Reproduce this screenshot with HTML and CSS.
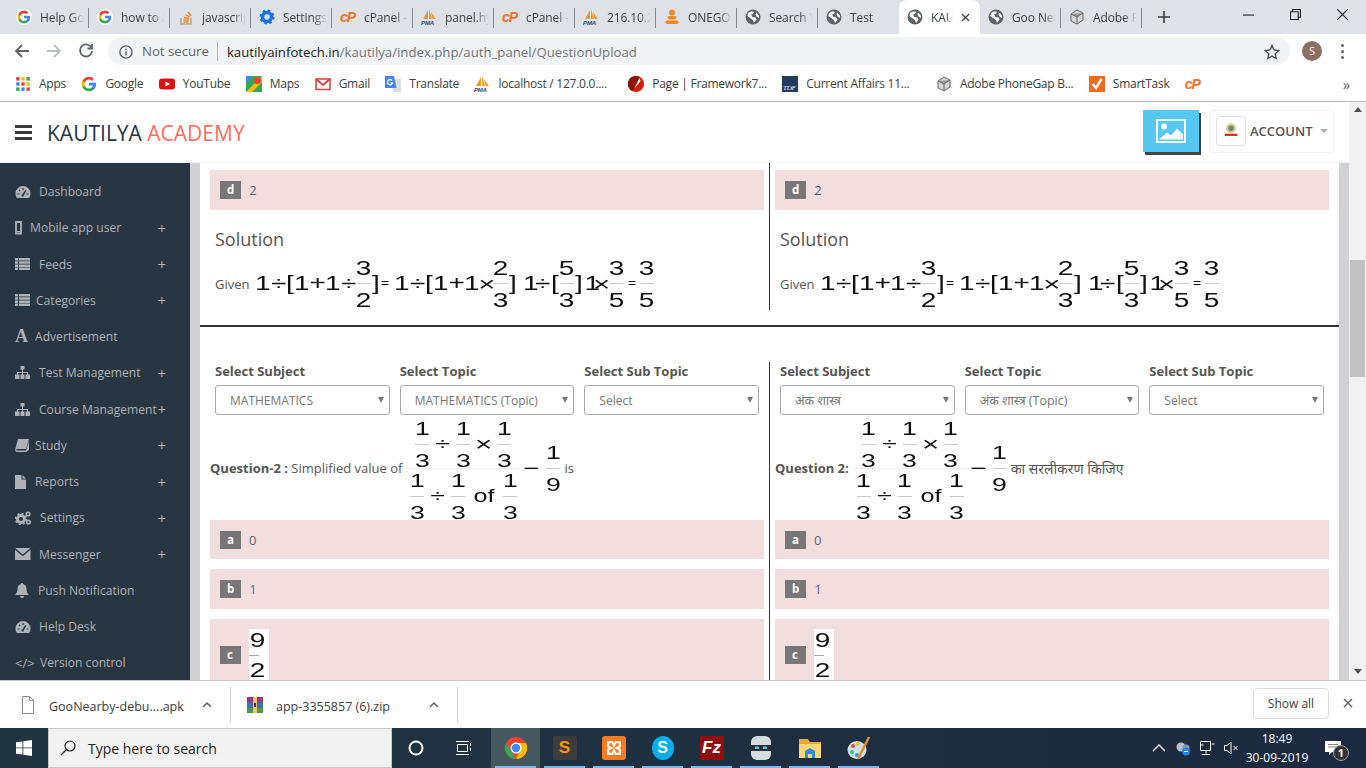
FILE: index.html
```html
<!DOCTYPE html>
<html lang="en">
  <head>
    <meta charset="UTF-8" />
    <meta name="viewport" content="width=device-width, initial-scale=1" />
    <title>KAUTILYA ACADEMY</title>
    <link rel="stylesheet" href="styles.css">
  </head>
  <body>
    <!-- Shared icons -->
    <svg class="defs" aria-hidden="true">
      <symbol id="i-g" viewBox="0 0 24 24">
        <path fill="#4285F4" d="M22.56 12.25c0-.78-.07-1.53-.2-2.25H12v4.26h5.92c-.26 1.37-1.04 2.53-2.21 3.31v2.77h3.57c2.08-1.92 3.28-4.74 3.28-8.09z"/>
        <path fill="#34A853" d="M12 23c2.97 0 5.46-.98 7.28-2.66l-3.57-2.77c-.98.66-2.23 1.06-3.71 1.06-2.86 0-5.29-1.93-6.16-4.53H2.18v2.84C3.99 20.53 7.7 23 12 23z"/>
        <path fill="#FBBC05" d="M5.84 14.09c-.22-.66-.35-1.36-.35-2.09s.13-1.43.35-2.09V7.07H2.18C1.43 8.55 1 10.22 1 12s.43 3.45 1.18 4.93l3.66-2.84z"/>
        <path fill="#EA4335" d="M12 5.38c1.62 0 3.06.56 4.21 1.64l3.15-3.15C17.45 2.09 14.97 1 12 1 7.7 1 3.99 3.47 2.18 7.07l3.66 2.84c.87-2.6 3.3-4.53 6.16-4.53z"/>
      </symbol>
      <symbol id="i-globe" viewBox="0 0 16 16">
        <circle cx="8" cy="8" r="7.5" fill="#5f6368"/>
        <path fill="#fff" d="M3 4l3-1.6 3 .4-1 2.2-2 .6L7.5 8l3 .5 1 2-2.500 3.600-1-3.100L5 9 2.500 7zM11 3.500l2.500 2.500.8 3-2.300-1-1.500-2.500z"/>
      </symbol>
      <symbol id="i-pma" viewBox="0 0 16 16">
        <path fill="#f29b2c" d="M2 10L7 1v9zM8 10V0l3 10zM11.500 10L10 3l5 7z"/>
        <text x="0" y="15.500" font-size="6" font-weight="700" font-style="italic" font-family="Liberation Sans" fill="#2b4a7f">PMA</text>
      </symbol>
      <symbol id="i-adobe" viewBox="0 0 16 16">
        <path fill="#d6d6d6" stroke="#666" d="M2 5l6-4 6 3v7l-6 4-6-3z"/>
        <path fill="#999" stroke="#666" d="M2 5l6 3 6-4M8 8v7"/>
      </symbol>
      <symbol id="i-gauge" viewBox="0 0 16 14">
        <path fill="currentColor" d="M8 1a7.500 7.500 0 0 1 7.500 7.500c0 1.700-.5 3.200-1.400 4.500H1.900A7.500 7.500 0 0 1 .5 8.500 7.500 7.500 0 0 1 8 1z"/>
        <path fill="#2a3542" d="M7.500 3h1.200v2H7.500zM3.600 5l1-.8 1 1.400-1 .8zM2.500 8.500h2v1h-2zM11.500 8.500h2v1h-2zM10.200 5l1.200.8-2.600 4.400a1.200 1.200 0 1 1-1.300-1z"/>
      </symbol>
      <symbol id="i-list" viewBox="0 0 15 12">
        <path fill="currentColor" d="M0 0h3v2.500H0zM4 0h11v2.500H4zM0 3.200h3v2.500H0zM4 3.200h11v2.500H4zM0 6.400h3v2.500H0zM4 6.400h11v2.500H4zM0 9.500h3V12H0zM4 9.500h11V12H4z"/>
      </symbol>
      <symbol id="i-tree" viewBox="0 0 15 13">
        <path fill="currentColor" d="M5.500 0h4v3.500H8V6h5v2.500h2V13h-4.500V8.500H12V7H8v1.500h1.500V13h-4V8.500H7V7H3v1.500h1.500V13H0V8.500h2V6h5V3.500H5.500z"/>
      </symbol>
    </svg>

    <div class="screen">
      <!-- Tabs -->
      <div class="tabstrip">
        <div class="tab"><svg class="fav fav-round"><use href="#i-g"/></svg><span class="tab-t">Help Google</span></div>
        <div class="tab"><svg class="fav fav-round"><use href="#i-g"/></svg><span class="tab-t">how to add</span></div>
        <div class="tab">
          <svg class="fav" viewBox="0 0 16 16"><path fill="none" stroke="#b5a68f" stroke-width="1.500" d="M3 9v6h10V9"/><path fill="none" stroke="#f28a2a" stroke-width="1.500" d="M5.500 13h5M5.500 10.800l5 .5M6 8.500l5 1.300M7.500 5.500l4 2.800M10 3l3 4"/></svg>
          <span class="tab-t">javascript</span>
        </div>
        <div class="tab">
          <svg class="fav" viewBox="0 0 16 16"><circle cx="8" cy="8" r="4.500" fill="none" stroke="#1a73e8" stroke-width="3.500"/><circle cx="8" cy="8" r="6.500" fill="none" stroke="#1a73e8" stroke-width="2" stroke-dasharray="2.500 2.600"/></svg>
          <span class="tab-t">Settings</span>
        </div>
        <div class="tab"><span class="fav cp">cP</span><span class="tab-t">cPanel - W</span></div>
        <div class="tab"><svg class="fav"><use href="#i-pma"/></svg><span class="tab-t">panel.hym</span></div>
        <div class="tab"><span class="fav cp">cP</span><span class="tab-t">cPanel - W</span></div>
        <div class="tab"><svg class="fav"><use href="#i-pma"/></svg><span class="tab-t">216.10.24</span></div>
        <div class="tab">
          <svg class="fav" viewBox="0 0 16 16"><circle cx="8" cy="3.500" r="3" fill="#f28a2a"/><rect x="3.500" y="7" width="9" height="3.500" rx="1.700" fill="#f28a2a"/><rect x="1.500" y="11.500" width="13" height="3.500" rx="1.700" fill="#f28a2a"/></svg>
          <span class="tab-t">ONEGO</span>
        </div>
        <div class="tab"><svg class="fav"><use href="#i-globe"/></svg><span class="tab-t">Search Y</span></div>
        <div class="tab tab-nosep"><svg class="fav"><use href="#i-globe"/></svg><span class="tab-t">Test</span></div>
        <div class="tab tab-active">
          <svg class="fav"><use href="#i-globe"/></svg><span class="tab-t">KAUTILYA</span>
          <svg class="tab-x" viewBox="0 0 10 10"><path d="M1 1l8 8M9 1l-8 8"/></svg>
        </div>
        <div class="tab"><svg class="fav"><use href="#i-globe"/></svg><span class="tab-t">Goo Near</span></div>
        <div class="tab"><svg class="fav"><use href="#i-adobe"/></svg><span class="tab-t">Adobe Ph</span></div>
        <svg class="tab-new" viewBox="0 0 12 12"><path d="M6 0v12M0 6h12"/></svg>
        <div class="winbtns">
          <svg viewBox="0 0 10 10"><path d="M0 5.500h10"/></svg>
          <svg viewBox="0 0 10 10"><path d="M0.500 2.500h7v7h-7zM2.500 2.500v-2h7v7h-2"/></svg>
          <svg viewBox="0 0 10 10"><path d="M0 0l10 10M10 0L0 10"/></svg>
        </div>
      </div>

      <!-- Toolbar -->
      <div class="toolbar">
        <svg class="tool" viewBox="0 0 16 16"><path d="M15 8H2M8 2L2 8l6 6"/></svg>
        <svg class="tool tool-off" viewBox="0 0 16 16"><path d="M1 8h13M8 2l6 6-6 6"/></svg>
        <svg class="tool" viewBox="0 0 16 16"><path d="M13.500 5A6 6 0 1 0 14 8M14 1v4.500H9.500"/></svg>
        <div class="omni">
          <svg class="omni-info" viewBox="0 0 16 16"><circle cx="8" cy="8" r="7"/><path d="M8 7v5M8 4v1.800"/></svg>
          <span class="omni-warn">Not secure</span>
          <span class="omni-url"><b>kautilyainfotech.in</b>/kautilya/index.php/auth_panel/QuestionUpload</span>
          <svg class="omni-star" viewBox="0 0 16 16"><path d="M8 1.500l2 4.500 4.800.5-3.600 3.200 1 4.800L8 12.100l-4.200 2.400 1-4.800L1.200 6.500 6 6z"/></svg>
        </div>
        <span class="profile">S</span>
        <span class="kebab"><i></i><i></i><i></i></span>
      </div>

      <!-- Bookmarks -->
      <div class="bookmarks">
        <span class="bm">
          <svg class="fav" viewBox="0 0 14 14"><path fill="#ea4335" d="M1 1h3v3H1z"/><path fill="#fbbc05" d="M5.500 1h3v3h-3z"/><path fill="#34a853" d="M10 1h3v3h-3z"/><path fill="#4285f4" d="M1 5.500h3v3H1z"/><path fill="#ea4335" d="M5.500 5.500h3v3h-3z"/><path fill="#fbbc05" d="M10 5.500h3v3h-3z"/><path fill="#34a853" d="M1 10h3v3H1z"/><path fill="#4285f4" d="M5.500 10h3v3h-3z"/><path fill="#ea4335" d="M10 10h3v3h-3z"/></svg>
          Apps
        </span>
        <span class="bm"><svg class="fav"><use href="#i-g"/></svg>Google</span>
        <span class="bm">
          <svg class="fav" viewBox="0 0 16 16"><rect y="2.500" width="16" height="11" rx="3" fill="#e01010"/><path fill="#fff" d="M6.500 5.500l4.500 2.500-4.500 2.500z"/></svg>
          YouTube
        </span>
        <span class="bm">
          <svg class="fav" viewBox="0 0 16 16"><rect width="16" height="16" fill="#34a853"/><path fill="#fbbc05" d="M0 16L16 0v6L6 16z"/><path fill="#4285f4" d="M0 0h7L0 7z"/><circle cx="11.500" cy="4.500" r="3.500" fill="#ea4335"/></svg>
          Maps
        </span>
        <span class="bm">
          <svg class="fav" viewBox="0 0 16 16"><path fill="#fff" stroke="#d44" stroke-width="1.600" d="M1 3h14v10.500H1z"/><path fill="none" stroke="#d44" stroke-width="2" d="M1 3l7 6 7-6"/></svg>
          Gmail
        </span>
        <span class="bm">
          <svg class="fav" viewBox="0 0 16 16"><path fill="#ddd" d="M6 3h10v13H8z"/><path fill="#4285f4" d="M0 0h9l2.500 12H0z"/><path fill="none" stroke="#fff" stroke-width="1.300" d="M7 4.500A2.600 2.600 0 1 0 7.500 7H5.500"/></svg>
          Translate
        </span>
        <span class="bm bm-wide"><svg class="fav"><use href="#i-pma"/></svg>localhost / 127.0.0....</span>
        <span class="bm">
          <svg class="fav" viewBox="0 0 16 16"><circle cx="8" cy="8" r="8" fill="#d81e06"/><path fill="#8e1205" d="M8 0a8 8 0 0 0-4 15C8 12 11 6 12 1.200A8 8 0 0 0 8 0z"/><path fill="#fff" d="M11.500 2L6 13l6.500-8z"/></svg>
          Page | Framework7...
        </span>
        <span class="bm bm-wider">
          <svg class="fav" viewBox="0 0 16 16"><rect width="16" height="16" fill="#263a5e"/><text x="1" y="14" font-size="7" font-style="italic" font-family="Liberation Serif" fill="#fff">TDF</text></svg>
          Current Affairs 11...
        </span>
        <span class="bm"><svg class="fav"><use href="#i-adobe"/></svg>Adobe PhoneGap B...</span>
        <span class="bm">
          <svg class="fav" viewBox="0 0 16 16"><rect width="16" height="16" fill="#f26a1b"/><path fill="none" stroke="#fff" stroke-width="2.500" d="M3.500 8l3.500 4 5.500-9"/></svg>
          SmartTask
        </span>
        <span class="bm"><span class="fav cp">cP</span></span>
        <span class="bm-more">»</span>
      </div>

      <!-- Page and its scrollbar -->
      <div class="viewport">
        <div class="app">
          <header class="topbar">
            <span class="burger"><i></i><i></i><i></i></span>
            <span class="brand">KAUTILYA <em>ACADEMY</em></span>
            <span class="pic-btn">
              <svg viewBox="0 0 30 24"><path fill="none" stroke="#fff" stroke-width="2" d="M1 1h28v22H1z"/><circle cx="8" cy="7.500" r="3" fill="#fff"/><path fill="#fff" d="M3 20.500l8-7 4 3 6-7 6 6v5z"/></svg>
            </span>
            <span class="account">
              <span class="avatar">
                <svg viewBox="0 0 20 20"><circle cx="10" cy="7" r="5.500" fill="#e3c88e"/><circle cx="10" cy="7" r="3" fill="#5c8d7a"/><rect x="3" y="13" width="14" height="2.500" fill="#c0392b"/></svg>
              </span>
              ACCOUNT
              <i class="caret"></i>
            </span>
          </header>

          <div class="body">
            <nav class="sidebar">
              <a class="nav-i"><svg width="24" height="14" viewBox="0 0 24 14"><use href="#i-gauge" width="16" height="14"/></svg>Dashboard</a>
              <a class="nav-i">
                <svg width="15" height="14" viewBox="0 0 15 14"><path fill="none" stroke="currentColor" stroke-width="1.800" d="M1 1h5v11.500H1z"/><path stroke="currentColor" d="M1 10.500h5"/></svg>
                Mobile app user<u>+</u>
              </a>
              <a class="nav-i"><svg width="24" height="12" viewBox="0 0 24 12"><use href="#i-list" width="15" height="12"/></svg>Feeds<u>+</u></a>
              <a class="nav-i"><svg width="21" height="12" viewBox="0 0 21 12"><use href="#i-list" width="15" height="12"/></svg>Categories<u>+</u></a>
              <a class="nav-i"><span class="nav-a">A</span>Advertisement</a>
              <a class="nav-i"><svg width="24" height="13" viewBox="0 0 24 13"><use href="#i-tree" width="15" height="13"/></svg>Test Management<u>+</u></a>
              <a class="nav-i"><svg width="24" height="13" viewBox="0 0 24 13"><use href="#i-tree" width="15" height="13"/></svg>Course Management<u>+</u></a>
              <a class="nav-i">
                <svg width="20" height="13" viewBox="0 0 20 13"><path fill="currentColor" d="M3 0h11l-3 10H1.800c-.8 0-.8 1.500 0 1.500H11L14 2v9l-3 2H2C.5 13 0 12 .3 10z"/></svg>
                Study<u>+</u>
              </a>
              <a class="nav-i">
                <svg width="20" height="14" viewBox="0 0 20 14"><path fill="currentColor" d="M0 0h6.500v4.500H11V14H0zM7.500 0L11 3.500H7.500z"/></svg>
                Reports<u>+</u>
              </a>
              <a class="nav-i">
                <svg width="25" height="14" viewBox="0 0 25 14"><circle cx="6" cy="8" r="3.500" fill="none" stroke="currentColor" stroke-width="3"/><circle cx="6" cy="8" r="5.500" fill="none" stroke="currentColor" stroke-width="1.500" stroke-dasharray="2 2.300"/><circle cx="13" cy="3" r="1.800" fill="none" stroke="currentColor" stroke-width="1.500"/><circle cx="13.500" cy="11" r="1.800" fill="none" stroke="currentColor" stroke-width="1.500"/></svg>
                Settings<u>+</u>
              </a>
              <a class="nav-i">
                <svg width="24" height="12" viewBox="0 0 24 12"><path fill="currentColor" d="M0 0h15.500L7.800 6.500zM0 1.800v10.200h15.500V1.800L7.800 8.300z"/></svg>
                Messenger<u>+</u>
              </a>
              <a class="nav-i">
                <svg width="23" height="15" viewBox="0 0 23 15"><path fill="currentColor" d="M7 0c.8 0 1 .5 1 1 2.500.5 3.500 2.500 3.500 5 0 3 1 4.500 2.500 6H0c1.500-1.500 2.500-3 2.500-6 0-2.500 1-4.500 3.500-5 0-.5.200-1 1-1zM5 13h4c0 1-1 2-2 2s-2-1-2-2z"/></svg>
                Push Notification
              </a>
              <a class="nav-i"><svg width="24" height="14" viewBox="0 0 24 14"><use href="#i-gauge" width="16" height="14"/></svg>Help Desk</a>
              <a class="nav-i"><span class="nav-code">&lt;/&gt;</span>Version control</a>
            </nav>

            <main class="content">
              <div class="pair">
                <section class="col">
                  <div class="opt"><span class="opt-k">d</span><span class="opt-v">2</span></div>
                  <h3 class="sol-h">Solution</h3>
                  <div class="sol">
                    <span class="given">Given</span>
                    <span class="m">1</span><span class="m">÷</span><span class="m-b">[</span><span class="m">1</span><span class="m">+</span><span class="m">1</span><span class="m">÷</span>
                    <span class="frac"><b>3</b><i></i><b>2</b></span><span class="m-b">]</span><span class="m-e">=</span>
                    <span class="m ml4">1</span><span class="m">÷</span><span class="m-b">[</span><span class="m">1</span><span class="m">+</span><span class="m">1</span><span class="m m-x">×</span>
                    <span class="frac"><b>2</b><i></i><b>3</b></span><span class="m-b">]</span>
                    <span class="m-n ml8">1</span><span class="m">÷</span><span class="m-b">[</span><span class="frac"><b>5</b><i></i><b>3</b></span><span class="m-b">]</span>
                    <span class="m-t ml3">1</span><span class="m m-x m-x2">×</span><span class="frac"><b>3</b><i></i><b>5</b></span><span class="m-e m-e2">=</span><span class="frac"><b>3</b><i></i><b>5</b></span>
                  </div>
                </section>
                <section class="col">
                  <div class="opt"><span class="opt-k">d</span><span class="opt-v opt-navy">2</span></div>
                  <h3 class="sol-h">Solution</h3>
                  <div class="sol">
                    <span class="given">Given</span>
                    <span class="m">1</span><span class="m">÷</span><span class="m-b">[</span><span class="m">1</span><span class="m">+</span><span class="m">1</span><span class="m">÷</span>
                    <span class="frac"><b>3</b><i></i><b>2</b></span><span class="m-b">]</span><span class="m-e">=</span>
                    <span class="m ml4">1</span><span class="m">÷</span><span class="m-b">[</span><span class="m">1</span><span class="m">+</span><span class="m">1</span><span class="m m-x">×</span>
                    <span class="frac"><b>2</b><i></i><b>3</b></span><span class="m-b">]</span>
                    <span class="m-n ml8">1</span><span class="m">÷</span><span class="m-b">[</span><span class="frac"><b>5</b><i></i><b>3</b></span><span class="m-b">]</span>
                    <span class="m-t ml3">1</span><span class="m m-x m-x2">×</span><span class="frac"><b>3</b><i></i><b>5</b></span><span class="m-e m-e2">=</span><span class="frac"><b>3</b><i></i><b>5</b></span>
                  </div>
                </section>
              </div>

              <hr class="rule">

              <div class="pair">
                <section class="col">
                  <div class="pickers">
                    <label class="pick"><span>Select Subject</span><span class="pick-box"><select><option>MATHEMATICS</option></select></span></label>
                    <label class="pick"><span>Select Topic</span><span class="pick-box"><select><option>MATHEMATICS (Topic)</option></select></span></label>
                    <label class="pick"><span>Select Sub Topic</span><span class="pick-box"><select><option>Select</option></select></span></label>
                  </div>
                  <div class="q">
                    <span class="q-lead"><b>Question-2 :</b> Simplified value of</span>
                    <span class="stack">
                      <span class="stack-top">
                        <span class="frac"><b>1</b><i></i><b>3</b></span><span class="m-op">÷</span><span class="frac"><b>1</b><i></i><b>3</b></span><span class="m-op m-op-x">×</span><span class="frac"><b>1</b><i></i><b>3</b></span>
                      </span>
                      <span class="stack-bot">
                        <span class="frac"><b>1</b><i></i><b>3</b></span><span class="m-op">÷</span><span class="frac"><b>1</b><i></i><b>3</b></span><span class="m-of">of</span><span class="frac"><b>1</b><i></i><b>3</b></span>
                      </span>
                    </span>
                    <span class="m-minus">−</span><span class="frac q-frac"><b>1</b><i></i><b>9</b></span><span class="q-tail">is</span>
                  </div>
                  <div class="opt"><span class="opt-k">a</span><span class="opt-v">0</span></div>
                  <div class="opt"><span class="opt-k">b</span><span class="opt-v opt-link">1</span></div>
                  <div class="opt opt-tall"><span class="opt-k">c</span><span class="frac frac-img"><b>9</b><i></i><b>2</b></span></div>
                </section>
                <section class="col">
                  <div class="pickers">
                    <label class="pick"><span>Select Subject</span><span class="pick-box"><select class="hi"><option>अंक शास्त्र</option></select></span></label>
                    <label class="pick"><span>Select Topic</span><span class="pick-box"><select class="hi"><option>अंक शास्त्र (Topic)</option></select></span></label>
                    <label class="pick"><span>Select Sub Topic</span><span class="pick-box"><select><option>Select</option></select></span></label>
                  </div>
                  <div class="q">
                    <b class="q-lead">Question 2:</b>
                    <span class="stack">
                      <span class="stack-top">
                        <span class="frac"><b>1</b><i></i><b>3</b></span><span class="m-op">÷</span><span class="frac"><b>1</b><i></i><b>3</b></span><span class="m-op m-op-x">×</span><span class="frac"><b>1</b><i></i><b>3</b></span>
                      </span>
                      <span class="stack-bot">
                        <span class="frac"><b>1</b><i></i><b>3</b></span><span class="m-op">÷</span><span class="frac"><b>1</b><i></i><b>3</b></span><span class="m-of">of</span><span class="frac"><b>1</b><i></i><b>3</b></span>
                      </span>
                    </span>
                    <span class="m-minus">−</span><span class="frac q-frac"><b>1</b><i></i><b>9</b></span><span class="q-tail q-hi">का सरलीकरण किजिए</span>
                  </div>
                  <div class="opt"><span class="opt-k">a</span><span class="opt-v">0</span></div>
                  <div class="opt"><span class="opt-k">b</span><span class="opt-v opt-visited">1</span></div>
                  <div class="opt opt-tall"><span class="opt-k">c</span><span class="frac frac-img"><b>9</b><i></i><b>2</b></span></div>
                </section>
              </div>
            </main>
          </div>
        </div>

        <div class="sbar">
          <i class="sbar-up"></i>
          <i class="sbar-thumb"></i>
          <i class="sbar-down"></i>
        </div>
      </div>

      <!-- Downloads -->
      <div class="downloads">
        <div class="dl">
          <svg width="33" height="18" viewBox="0 0 33 18"><path fill="#fff" stroke="#8a8a8a" d="M6.500 .5h7l4 4v13h-11z"/><path fill="none" stroke="#8a8a8a" d="M13.500 .5v4h4"/></svg>
          <span class="dl-n">GooNearby-debu....apk</span>
          <svg class="dl-c" viewBox="0 0 10 6"><path d="M1 5l4-4 4 4"/></svg>
        </div>
        <div class="dl">
          <svg width="29" height="16" viewBox="0 0 29 16"><rect width="16" height="5" fill="#a3357f"/><rect y="5" width="16" height="6" fill="#3e6fb5"/><rect y="11" width="16" height="5" fill="#4f9a3c"/><path fill="#e9c46a" d="M6 0h4v16H6z"/><path fill="#7a1f1f" d="M7 6h2v4H7z"/></svg>
          <span class="dl-n">app-3355857 (6).zip</span>
          <svg class="dl-c" viewBox="0 0 10 6"><path d="M1 5l4-4 4 4"/></svg>
        </div>
        <span class="showall">Show all</span>
        <svg class="dl-x" viewBox="0 0 10 10"><path d="M1 1l8 8M9 1l-8 8"/></svg>
      </div>

      <!-- Windows taskbar -->
      <div class="taskbar">
        <span class="tb-start">
          <svg viewBox="0 0 16 16"><path fill="#fff" d="M0 2.300L6.500 1.400v6.100H0zM7.300 1.300L16 0v7.500H7.300zM0 8.300h6.500v6.200L0 13.700zM7.300 8.300H16V16l-8.700-1.200z"/></svg>
        </span>
        <span class="tb-search">
          <svg viewBox="0 0 16 16"><circle cx="10" cy="6" r="5"/><path d="M6.500 9.500L1 15"/></svg>
          Type here to search
        </span>
        <span class="tb-sys"><svg viewBox="0 0 16 16"><circle cx="8" cy="8" r="6.500" fill="none" stroke="#fff" stroke-width="2"/></svg></span>
        <span class="tb-sys"><svg viewBox="0 0 16 16"><path fill="none" stroke="#fff" d="M1.500 4.500h10v7h-10zM0 1.500h13M0 14.500h13M14.500 3v3M14.500 8v3"/></svg></span>
        <span class="tb-app tb-on">
          <svg viewBox="0 0 24 24"><circle cx="12" cy="12" r="11" fill="#ea4335"/><path fill="#34a853" d="M12 23A11 11 0 0 1 2 7l6 10z"/><path fill="#fbbc05" d="M12 23a11 11 0 0 0 10-16H12l4 7z"/><circle cx="12" cy="12" r="5.500" fill="#fff"/><circle cx="12" cy="12" r="4.200" fill="#4285f4"/></svg>
        </span>
        <span class="tb-app"><span class="app-tile app-sublime">S</span></span>
        <span class="tb-app">
          <span class="app-tile app-xampp"><svg viewBox="0 0 24 24"><path fill="none" stroke="#fff" stroke-width="2.500" d="M5 5h5l2 4 2-4h5v5l-4 2 4 2v5h-5l-2-4-2 4H5v-5l4-2-4-2z"/></svg></span>
        </span>
        <span class="tb-app"><span class="app-skype">S</span></span>
        <span class="tb-app"><span class="app-tile app-fz">Fz</span></span>
        <span class="tb-app">
          <svg viewBox="0 0 24 24"><rect x="2" width="20" height="24" rx="6" fill="#d9dcde"/><rect x="2" y="9" width="20" height="6" fill="#2b3138"/><path fill="#4fc3f7" d="M6 10.500h4v2.500H6zM14 10.500h4v2.500h-4z"/></svg>
        </span>
        <span class="tb-app">
          <svg viewBox="0 0 24 24"><path fill="#e8a93a" d="M1 3h9l2 3h11v16H1z"/><path fill="#f9d776" d="M1 8h22v14H1z"/><path fill="#2e8bd6" d="M7 22v-7l5-3 5 3v7h-3v-4h-4v4z"/></svg>
        </span>
        <span class="tb-app">
          <svg viewBox="0 0 24 24"><ellipse cx="10" cy="14" rx="9.500" ry="9" fill="#cfe0ee"/><circle cx="6" cy="10" r="2" fill="#e74c3c"/><circle cx="11" cy="8" r="2" fill="#f1c40f"/><circle cx="5" cy="16" r="2" fill="#2ecc71"/><circle cx="10" cy="19" r="2" fill="#3498db"/><path stroke="#e08e2b" stroke-width="2.500" d="M22 1L11 23"/></svg>
        </span>
        <div class="tray">
          <svg class="tray-i" viewBox="0 0 16 16"><path fill="none" stroke="#fff" stroke-width="1.300" d="M2 11l6-6 6 6"/></svg>
          <svg class="tray-i" viewBox="0 0 16 16"><circle cx="6" cy="7" r="4.500" fill="#b9c0c7"/><circle cx="11" cy="8" r="3.500" fill="#8f979e"/><circle cx="11" cy="11.500" r="4" fill="#1e88e5"/><path stroke="#fff" d="M9 11.500h4"/></svg>
          <svg class="tray-i" viewBox="0 0 16 16"><path fill="none" stroke="#fff" d="M1.500 1.500h10v9h-10zM1.500 5h3M7 10.500v3M3 14.500h8M12.500 4h3"/></svg>
          <svg class="tray-i" viewBox="0 0 16 16"><path fill="none" stroke="#fff" d="M1.500 5.500h2.500L8 2v12l-4-3.500H1.500zM10.500 6l4 4M14.500 6l-4 4"/></svg>
          <span class="clock"><span>18:49</span><span>30-09-2019</span></span>
          <span class="action">
            <svg viewBox="0 0 16 16"><path fill="#fff" d="M0 1h16v11H7l-3 3v-3H0z"/><path stroke="#888" d="M3 4.500h10M3 7h10"/></svg>
            <b>1</b>
          </span>
        </div>
      </div>
    </div>
  </body>
</html>
```

FILE: styles.css
```css
* {
  box-sizing: border-box;
}

body {
  margin: 0;
  font-family: "Open Sans", "Noto Sans", sans-serif;
  color: #555;
  background: #fff;
}

.defs {
  display: none;
}

.screen {
  width: 1366px;
  height: 768px;
  overflow: hidden;
  display: flex;
  flex-direction: column;
}

/* Chrome tabs */
.tabstrip {
  height: 34px;
  flex: none;
  display: flex;
  align-items: center;
  padding-left: 8px;
  background: #dee1e6;
  font-size: 12px;
  letter-spacing: -0.1px;
  color: #3c4043;
}

.tab {
  width: 81px;
  height: 34px;
  flex: none;
  display: flex;
  align-items: center;
  gap: 8px;
  padding: 0 5px 0 8px;
  position: relative;
}

.tab::after {
  content: "";
  position: absolute;
  right: 0;
  top: 8px;
  height: 20px;
  width: 1px;
  background: #85888c;
}

.tab-nosep::after,
.tab-active::after {
  display: none;
}

.tab-active {
  background: #fff;
  border-radius: 8px 8px 0 0;
}

.tab-t {
  flex: 1;
  min-width: 0;
  overflow: hidden;
  white-space: nowrap;
  -webkit-mask-image: linear-gradient(90deg, #000 70%, transparent);
  mask-image: linear-gradient(90deg, #000 70%, transparent);
}

.tab-x {
  width: 9px;
  height: 9px;
  flex: none;
  margin-right: 5px;
  fill: none;
  stroke: #45494d;
  stroke-width: 1.5;
}

.tab-new {
  width: 12px;
  height: 12px;
  margin-left: 16px;
  fill: none;
  stroke: #3c4043;
  stroke-width: 1.6;
}

.winbtns {
  margin-left: auto;
  display: flex;
  align-self: flex-start;
  margin-top: 9px;
  margin-right: 18px;
  gap: 36px;
}

.winbtns svg {
  width: 11px;
  height: 11px;
  fill: none;
  stroke: #222;
  stroke-width: 1;
}

.fav {
  width: 16px;
  height: 16px;
  flex: none;
}

.fav-round {
  background: #fff;
  border-radius: 50%;
  padding: 1px;
}

.cp {
  font-family: "Liberation Sans", sans-serif;
  font-weight: 700;
  font-style: italic;
  font-size: 14px;
  line-height: 16px;
  letter-spacing: -1px;
  color: #f4712a;
}

/* Toolbar */
.toolbar {
  height: 34px;
  flex: none;
  display: flex;
  align-items: center;
  padding-left: 14px;
  background: #fff;
  font-size: 13.2px;
}

.tool {
  width: 16px;
  height: 16px;
  flex: none;
  margin-right: 16px;
  fill: none;
  stroke: #5f6368;
  stroke-width: 1.8;
}

.tool-off {
  stroke: #bcbfc3;
}

.omni {
  width: 1182px;
  height: 28px;
  margin-left: -2px;
  flex: none;
  display: flex;
  align-items: center;
  padding: 1px 10px 0 11px;
  border-radius: 14px;
  background: #f1f3f4;
}

.omni-info {
  width: 14px;
  height: 14px;
  flex: none;
  fill: none;
  stroke: #5f6368;
  stroke-width: 1.6;
}

.omni-warn {
  margin-left: 9px;
  padding-right: 8px;
  border-right: 1px solid #b5b8bb;
  line-height: 19px;
  color: #5f6368;
}

.omni-url {
  margin-left: 9px;
  color: #70757a;
}

.omni-url b {
  font-weight: 400;
  color: #202124;
}

.omni-star {
  width: 16px;
  height: 16px;
  margin-left: auto;
  fill: none;
  stroke: #45494d;
  stroke-width: 1.3;
}

.profile {
  width: 20px;
  height: 20px;
  margin-left: 12px;
  border-radius: 50%;
  background: #8d6e63;
  color: #fff;
  font-size: 11px;
  line-height: 20px;
  text-align: center;
}

.kebab {
  margin-left: 19px;
  display: flex;
  flex-direction: column;
  gap: 3px;
}

.kebab i {
  width: 3px;
  height: 3px;
  border-radius: 50%;
  background: #5f6368;
}

/* Bookmarks */
.bookmarks {
  height: 34px;
  flex: none;
  display: flex;
  align-items: center;
  gap: 15.4px;
  padding: 0 16px 2px 15px;
  background: #fff;
  border-bottom: 1px solid #b9b9b9;
  font-size: 12px;
  letter-spacing: -0.25px;
  color: #3c4043;
  white-space: nowrap;
}

.bm {
  display: flex;
  align-items: center;
  gap: 8px;
}

.bm-wide {
  margin-right: 6px;
}

.bm-wider {
  margin-right: 11px;
}

.bm-more {
  margin-left: auto;
  font-size: 15px;
  color: #5f6368;
}

/* Page */
.viewport {
  flex: 1;
  min-height: 0;
  display: flex;
}

.app {
  flex: 1;
  min-width: 0;
  display: flex;
  flex-direction: column;
}

.topbar {
  height: 61px;
  flex: none;
  display: flex;
  align-items: center;
  padding: 0 15px;
  background: #fff;
  border-bottom: 1px solid #f1f2f7;
}

.burger {
  display: flex;
  flex-direction: column;
  gap: 3px;
  width: 17px;
}

.burger i {
  height: 3px;
  background: #3a3a3a;
}

.brand {
  margin: 2px 0 0 15px;
  font-size: 21px;
  color: #2a3542;
}

.brand em {
  font-style: normal;
  color: #ff6c60;
}

.pic-btn {
  width: 56px;
  height: 42px;
  margin-left: auto;
  margin-top: -2px;
  display: flex;
  align-items: center;
  justify-content: center;
  background: #57c8f2;
  box-shadow: 2px 3px 0 #444;
}

.pic-btn svg {
  width: 30px;
  height: 24px;
}

.account {
  width: 125px;
  height: 43px;
  margin-left: 10px;
  margin-top: -2px;
  display: flex;
  align-items: center;
  gap: 4px;
  padding-left: 6px;
  border: 1px solid #f0f0f3;
  border-radius: 4px;
  font-size: 13px;
  font-weight: 600;
  color: #555;
}

.avatar {
  width: 30px;
  height: 30px;
  display: flex;
  align-items: center;
  justify-content: center;
  border: 1px solid #e0e0e0;
  border-radius: 4px;
}

.avatar svg {
  width: 18px;
  height: 18px;
}

.caret {
  margin-left: 3px;
  border: 4px solid transparent;
  border-top-color: #a9adb3;
  border-bottom: 0;
}

.body {
  flex: 1;
  min-height: 0;
  display: flex;
  background: #d1d1d6;
  padding-right: 10px;
}

/* Sidebar */
.sidebar {
  width: 190px;
  flex: none;
  margin-right: 10px;
  padding-top: 10.5px;
  background: #2a3542;
  overflow: hidden;
}

.nav-i {
  height: 36.25px;
  display: flex;
  align-items: center;
  padding: 0 24px 0 15px;
  font-size: 12.1px;
  color: #aeb2b7;
  white-space: nowrap;
}

.nav-i svg {
  flex: none;
}

.nav-i u {
  margin-left: auto;
  font-size: 15px;
  text-decoration: none;
}

.nav-a {
  width: 20px;
  font-family: "Liberation Serif", serif;
  font-size: 18px;
  font-weight: 700;
}

.nav-code {
  width: 25px;
  font-size: 13px;
}

/* Content */
.content {
  flex: 1;
  min-width: 0;
  overflow: hidden;
  background: #fff;
}

.pair {
  display: flex;
}

.col {
  width: 569px;
  flex: none;
  padding: 7px 5px 0 10px;
}

.col + .col {
  width: 570px;
  padding: 7px 10px 0 5px;
  border-left: 1px solid #333;
}

.rule + .pair {
  margin-top: 35px;
}

.rule + .pair .col {
  padding-top: 0;
}

.rule {
  height: 2px;
  margin: 15px 0 0;
  border: 0;
  background: #333;
}

.opt {
  height: 40px;
  display: flex;
  align-items: center;
  gap: 8px;
  margin-bottom: 10px;
  padding-left: 10px;
  background: #f2dede;
  font-size: 13px;
}

.q + .opt {
  height: 39px;
}

.opt-tall {
  height: 72px;
  margin-bottom: 0;
}

.opt-k {
  min-width: 21px;
  height: 18px;
  padding: 0 7px;
  background: #777;
  color: #fff;
  font-size: 11.5px;
  font-weight: 700;
  line-height: 18px;
}

.opt-v {
  color: #5a6675;
}

.opt-link {
  color: #337ab7;
}

.opt-navy {
  color: #45608f;
}

.opt-visited {
  color: #7a5c9c;
}

.sol-h {
  margin: 19px 0 0 5px;
  font-size: 18px;
  font-weight: 400;
  line-height: 20px;
  color: #555;
}

.sol {
  display: flex;
  align-items: center;
  height: 47px;
  margin: 11px 0 3px 5px;
}

.given {
  width: 40px;
  font-size: 13px;
}

/* Formula pieces: Liberation Sans stretched to the wide look of the image */
.m,
.m-b,
.m-n,
.m-t,
.m-e,
.m-op,
.m-of,
.m-minus,
.frac b {
  display: block;
  font-family: "Liberation Sans", sans-serif;
  font-size: 20px;
  font-weight: 400;
  color: #111;
  text-align: center;
  transform: scaleX(1.4);
}

.m {
  width: 15.5px;
}

.m-x {
  width: 13.5px;
  font-size: 21px;
}

.m-x2 {
  width: 15px;
}

.m-b {
  width: 8px;
}

.m-n {
  width: 10px;
}

.m-t {
  width: 8px;
}

.m-e {
  width: 10px;
  font-size: 10px;
}

.m-e2 {
  width: 14px;
}

.ml3 {
  margin-left: 3px;
}

.ml4 {
  margin-left: 4px;
}

.ml8 {
  margin-left: 8px;
}

.frac {
  width: 16px;
  flex: none;
  display: flex;
  flex-direction: column;
  align-items: center;
}

.frac b {
  height: 23px;
  line-height: 16px;
}

.frac i {
  width: 14px;
  height: 1px;
  background: #c8c8c8;
}

.frac i + b {
  padding-top: 8px;
}

.frac-img {
  width: 20px;
  height: 62px;
  align-self: flex-start;
  align-items: flex-start;
  margin-top: 10px;
  padding: 3px 0 0 3px;
  background: #fff;
}

.frac-img i {
  width: 10px;
  margin-left: -3px;
  background: #aaa;
}

.frac-img i + b {
  padding-top: 6px;
}

.pickers {
  display: flex;
  gap: 10px;
  padding: 0 5px;
}

.pick {
  flex: 1;
  min-width: 0;
  display: flex;
  flex-direction: column;
  gap: 5px;
  font-size: 13px;
  font-weight: 700;
  line-height: 18px;
}

.pick-box {
  height: 30px;
  display: block;
  position: relative;
}

.pick-box::after {
  content: "";
  position: absolute;
  right: 6px;
  top: 12px;
  border: 3.5px solid transparent;
  border-top: 6px solid #777;
  border-bottom: 0;
}

.pick-box select {
  width: 100%;
  height: 30px;
  padding: 0 14px;
  appearance: none;
  background: #fff;
  border: 1px solid #a9a9a9;
  border-radius: 3px;
  font-family: inherit;
  font-size: 12px;
  color: #777;
}

.pick-box select.hi {
  font-size: 12.5px;
}

.q {
  height: 100px;
  margin-top: 5px;
  display: flex;
  align-items: center;
  font-size: 13px;
  white-space: nowrap;
}

/* Plain text and the last fraction sit on the main bar, a bit above the middle */
.q-lead,
.q-tail,
.m-minus,
.q-frac {
  margin-bottom: 4px;
}

.stack {
  width: 113px;
  flex: none;
  margin-left: 4px;
  display: flex;
  flex-direction: column;
}

.stack-top {
  display: flex;
  padding-left: 8px;
  align-items: center;
  border-bottom: 1px solid #eee;
  height: 48px;
}

.stack-bot {
  display: flex;
  padding-left: 3px;
  align-items: center;
  margin-top: 4px;
}

.q .frac b,
.q .m-op {
  font-size: 19px;
}

.m-op {
  width: 25px;
}

.q .m-op-x {
  font-size: 21px;
}

.m-of {
  width: 36px;
  font-size: 18px;
}

.m-minus {
  width: 15px;
  margin-left: 5px;
  margin-right: 6px;
}

.q-tail {
  margin-left: 3px;
}

.q-hi {
  font-size: 14px;
}

/* Page scrollbar */
.sbar {
  width: 17px;
  flex: none;
  display: flex;
  flex-direction: column;
  align-items: center;
  background: #f1f1f1;
}

.sbar-up,
.sbar-down {
  width: 0;
  height: 0;
  border: 4px solid transparent;
}

.sbar-up {
  margin-top: 5px;
  border-top: 0;
  border-bottom: 5px solid #505050;
}

.sbar-thumb {
  width: 15px;
  height: 117px;
  margin-top: 148px;
  background: #c1c1c1;
}

.sbar-down {
  margin-top: auto;
  margin-bottom: 6px;
  border-bottom: 0;
  border-top: 5px solid #505050;
}

/* Downloads */
.downloads {
  height: 48px;
  flex: none;
  display: flex;
  align-items: center;
  background: #fff;
  border-top: 1px solid #c8c8c8;
  font-size: 12.5px;
  color: #3c4043;
}

.dl {
  width: 227px;
  height: 36px;
  display: flex;
  align-items: center;
  padding-left: 16px;
  border-right: 1px solid #d5d5d5;
}

.dl:first-child {
  width: 231px;
}

.dl-n {
  flex: 1;
  padding-top: 3px;
  white-space: nowrap;
}

.dl-c {
  width: 10px;
  height: 6px;
  margin-right: 18px;
  fill: none;
  stroke: #5f6368;
  stroke-width: 1.5;
}

.showall {
  width: 76px;
  height: 31px;
  margin-left: auto;
  margin-bottom: 3px;
  border: 1px solid #dadce0;
  border-radius: 4px;
  font-size: 12px;
  line-height: 29px;
  text-align: center;
}

.dl-x {
  width: 10px;
  height: 10px;
  margin: 0 13px 3px 14px;
  fill: none;
  stroke: #5f6368;
  stroke-width: 1.5;
}

/* Windows taskbar */
.taskbar {
  height: 40px;
  flex: none;
  display: flex;
  align-items: stretch;
  background: linear-gradient(90deg, #1f3640, #1b2a40);
  color: #fff;
}

.tb-start {
  width: 48px;
  display: flex;
  align-items: center;
  justify-content: center;
}

.tb-start svg {
  width: 16px;
  height: 16px;
}

.tb-search {
  width: 344px;
  display: flex;
  align-items: center;
  gap: 12px;
  padding-left: 11px;
  background: #f2f2f2;
  border: 1px solid #c9c9c9;
  font-size: 14px;
  color: #222;
}

.tb-search svg {
  width: 16px;
  height: 16px;
  fill: none;
  stroke: #222;
  stroke-width: 1.2;
}

.tb-sys {
  width: 48px;
  display: flex;
  align-items: center;
  justify-content: center;
}

.tb-sys svg {
  width: 16px;
  height: 16px;
}

.tb-app {
  width: 49px;
  display: flex;
  align-items: center;
  justify-content: center;
  position: relative;
}

.tb-app > svg {
  width: 24px;
  height: 24px;
}

.tb-app::after {
  content: "";
  position: absolute;
  left: 4px;
  right: 4px;
  bottom: 0;
  height: 2px;
  background: #76b9ed;
}

.tb-on {
  background: #46585f;
}

.tb-sys + .tb-app {
  margin-left: 3px;
}

.app-tile {
  width: 24px;
  height: 24px;
  display: flex;
  align-items: center;
  justify-content: center;
  font-family: "Liberation Sans", sans-serif;
  font-weight: 700;
  font-size: 17px;
}

.app-sublime {
  background: #3c3c3c;
  border-radius: 2px;
  color: #ff9800;
}

.app-xampp {
  background: #f57c20;
  border-radius: 3px;
}

.app-xampp svg {
  width: 20px;
  height: 20px;
}

.app-fz {
  background: #8f0d0d;
  font-style: italic;
}

.app-skype {
  width: 22px;
  height: 24px;
  border-radius: 50%;
  background: #00aff0;
  font-family: "Liberation Sans", sans-serif;
  font-size: 16px;
  font-weight: 700;
  line-height: 24px;
  text-align: center;
}

.tray {
  margin-left: auto;
  padding-right: 11px;
  display: flex;
  align-items: center;
}

.tray-i {
  width: 24px;
  height: 16px;
}

.clock {
  width: 68px;
  display: flex;
  flex-direction: column;
  align-items: center;
  gap: 4px;
  font-size: 12px;
  line-height: 15px;
}

.action {
  width: 44px;
  display: flex;
  justify-content: center;
  position: relative;
}

.action svg {
  width: 16px;
  height: 16px;
}

.action b {
  position: absolute;
  left: 22px;
  top: 5px;
  width: 16px;
  height: 16px;
  border-radius: 50%;
  background: #333;
  border: 1px solid #999;
  font-size: 11px;
  line-height: 14px;
  text-align: center;
}
```
